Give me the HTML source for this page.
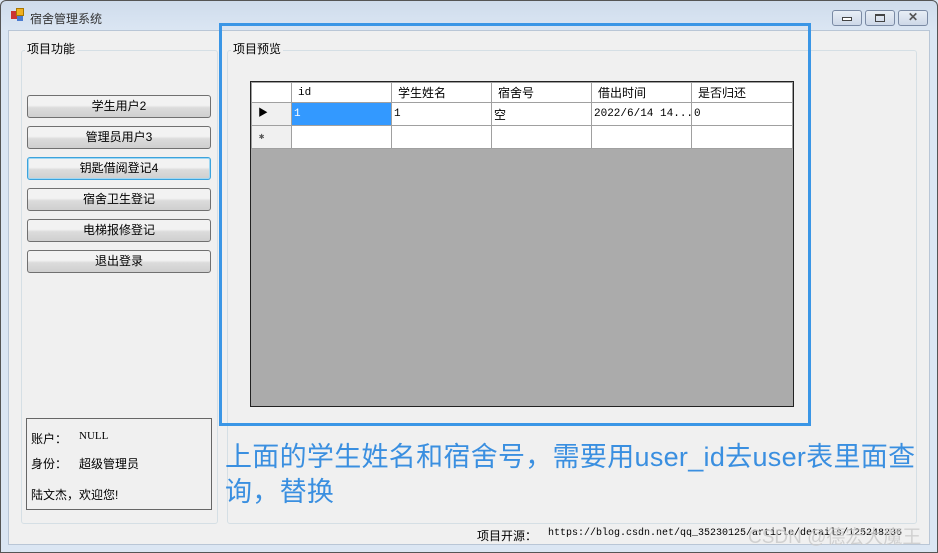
<!DOCTYPE html>
<html><head><meta charset="utf-8"><style>
*{margin:0;padding:0;box-sizing:border-box}
body{width:938px;height:553px;overflow:hidden;background:#dbe6f3;font-family:"Liberation Sans","Noto Sans CJK SC",sans-serif;font-size:12px;color:#000;position:relative}
.a{position:absolute}
.win{left:0;top:0;width:938px;height:553px;border:1px solid #555;border-radius:6px 6px 0 0;background:linear-gradient(#cfdcec,#dbe6f3 30px)}
.client{left:8px;top:30px;width:922px;height:515px;background:#f0f0f0;border:1px solid #b9c6d6}
.grp{border:1px solid #d5dfe5;border-radius:3px}
.lbl{background:#f0f0f0;padding:0 2px;font-size:12px}
.btn{left:27px;width:184px;height:23px;border:1px solid #707070;border-radius:3px;background:linear-gradient(#f2f2f2 45%,#dcdcdc 55%,#cfcfcf);text-align:center;line-height:21px;font-size:12px}
.wb{top:10px;height:16px;border:1px solid #7a8aa4;border-radius:3px;background:linear-gradient(#e8eef6,#cdd8e8)}
table{border-collapse:collapse;font-size:12px;table-layout:fixed}
td{border:1px solid #a0a0a0;height:23px;line-height:21px;padding:0 2px;background:#fff;width:100px;font-family:"Liberation Mono","Noto Sans CJK SC",monospace;font-size:11px;white-space:nowrap;overflow:hidden}
tr.h td{height:20px;line-height:18px;background:#fff;font-family:"Liberation Sans","Noto Sans CJK SC",sans-serif;font-size:12px;padding-left:6px}
td.rh{width:40px;background:#f0f0f0}
</style></head><body>
<div class="a win"></div>
<div class="a" style="left:11px;top:11px;width:8px;height:8px;background:#c33"></div>
<div class="a" style="left:16px;top:8px;width:8px;height:8px;background:#f0b020;border:1px solid #a70"></div>
<div class="a" style="left:17px;top:16px;width:6px;height:5px;background:#4a7bd0"></div>
<div class="a" style="left:30px;top:10px;font-size:12px;color:#333">宿舍管理系统</div>
<div class="a wb" style="left:832px;width:30px"><div class="a" style="left:9px;top:6px;width:10px;height:4px;border:1px solid #444;background:#fff"></div></div>
<div class="a wb" style="left:865px;width:30px"><div class="a" style="left:9px;top:3px;width:10px;height:8px;border:1px solid #444;border-top-width:2px"></div></div>
<div class="a wb" style="left:898px;width:30px;text-align:center;line-height:13px;font-weight:bold;color:#555">✕</div>
<div class="a client"></div>
<div class="a grp" style="left:21px;top:50px;width:197px;height:474px"></div>
<div class="a lbl" style="left:25px;top:40px">项目功能</div>
<div class="a grp" style="left:227px;top:50px;width:690px;height:474px"></div>
<div class="a lbl" style="left:231px;top:40px">项目预览</div>
<div class="a btn" style="top:95px">学生用户2</div>
<div class="a btn" style="top:126px">管理员用户3</div>
<div class="a btn" style="top:157px;border-color:#3ca3dc;box-shadow:inset 0 0 0 1px #9fd7f3">钥匙借阅登记4</div>
<div class="a btn" style="top:188px">宿舍卫生登记</div>
<div class="a btn" style="top:219px">电梯报修登记</div>
<div class="a btn" style="top:250px">退出登录</div>
<div class="a" style="left:26px;top:418px;width:186px;height:92px;border:1px solid #666"></div>
<div class="a" style="left:31px;top:430px">账户：</div><div class="a" style="left:79px;top:430px;font-family:'Liberation Serif',serif;font-size:11px">NULL</div>
<div class="a" style="left:31px;top:455px">身份：</div><div class="a" style="left:79px;top:455px">超级管理员</div>
<div class="a" style="left:31px;top:486px">陆文杰，欢迎您!</div>
<div class="a" style="left:250px;top:81px;width:544px;height:326px;background:#ababab;border:1px solid #222"></div>
<table class="a" style="left:251px;top:82px;width:541px">
<colgroup><col style="width:40px"><col style="width:100px"><col style="width:100px"><col style="width:100px"><col style="width:100px"><col style="width:101px"></colgroup>
<tr class="h"><td class="rh"></td><td style="font-family:'Liberation Mono',monospace;font-size:11px">id</td><td>学生姓名</td><td>宿舍号</td><td>借出时间</td><td>是否归还</td></tr>
<tr><td class="rh" style="font-size:10px;padding-left:6px">▶</td><td style="background:#3399ff;color:#fff">1</td><td>1</td><td style="font-family:'Noto Sans CJK SC',sans-serif;font-size:12px">空</td><td>2022/6/14 14...</td><td>0</td></tr>
<tr><td class="rh" style="font-size:9px;padding-left:7px;color:#555">✱</td><td></td><td></td><td></td><td></td><td></td></tr>
</table>
<div class="a" style="left:219px;top:23px;width:592px;height:403px;border:3px solid #3a96e6"></div>
<div class="a" style="left:225px;top:440px;width:700px;font-size:27px;letter-spacing:0.3px;line-height:35px;color:#3a8fe0">上面的学生姓名和宿舍号，需要用user_id去user表里面查询，替换</div>
<div class="a" style="left:477px;top:527px">项目开源：</div>
<div class="a" style="left:548px;top:528px;font-family:'Liberation Mono',monospace;font-size:10px">https://blog.csdn.net/qq_35230125/article/details/125248236</div>
<div class="a" style="left:748px;top:522px;font-size:19px;color:rgba(200,200,200,.8)">CSDN @德宏大魔王</div>
</body></html>
